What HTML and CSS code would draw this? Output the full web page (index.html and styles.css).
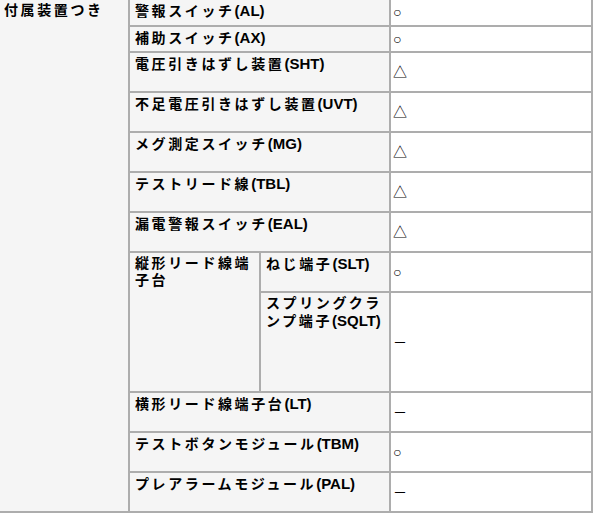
FILE: index.html
```html
<!DOCTYPE html>
<html lang="ja">
<head>
<meta charset="utf-8">
<title>付属装置</title>
<link rel="stylesheet" href="styles.css">
</head>
<body>
<table class="spec">
  <colgroup>
    <col class="c1">
    <col class="c2a">
    <col class="c2b">
    <col class="c3">
  </colgroup>
  <tr class="h27">
    <th class="group" rowspan="12">付属装置つき</th>
    <th colspan="2">警報スイッチ<span class="en">(AL)</span></th>
    <td><span class="mark">○</span></td>
  </tr>
  <tr class="h26">
    <th colspan="2">補助スイッチ<span class="en">(AX)</span></th>
    <td><span class="mark">○</span></td>
  </tr>
  <tr class="h40">
    <th colspan="2">電圧引きはずし装置<span class="en">(SHT)</span></th>
    <td>△</td>
  </tr>
  <tr class="h40">
    <th colspan="2">不足電圧引きはずし装置<span class="en">(UVT)</span></th>
    <td>△</td>
  </tr>
  <tr class="h40">
    <th colspan="2">メグ測定スイッチ<span class="en">(MG)</span></th>
    <td>△</td>
  </tr>
  <tr class="h40">
    <th colspan="2">テストリード線<span class="en">(TBL)</span></th>
    <td>△</td>
  </tr>
  <tr class="h40">
    <th colspan="2">漏電警報スイッチ<span class="en">(EAL)</span></th>
    <td>△</td>
  </tr>
  <tr class="h40">
    <th rowspan="2">縦形リード線端子台</th>
    <th>ねじ端子<span class="en">(SLT)</span></th>
    <td><span class="mark">○</span></td>
  </tr>
  <tr class="h100">
    <th>スプリングクランプ端子<span class="en">(SQLT)</span></th>
    <td>－</td>
  </tr>
  <tr class="h40">
    <th colspan="2">横形リード線端子台<span class="en">(LT)</span></th>
    <td>－</td>
  </tr>
  <tr class="h40">
    <th colspan="2">テストボタンモジュール<span class="en">(TBM)</span></th>
    <td><span class="mark">○</span></td>
  </tr>
  <tr class="h40">
    <th colspan="2">プレアラームモジュール<span class="en">(PAL)</span></th>
    <td>－</td>
  </tr>
</table>
</body>
</html>
```

FILE: styles.css
```css
html, body {
  margin: 0;
  padding: 0;
  background: #ffffff;
}

.spec {
  border-collapse: separate;
  border-spacing: 0;
  table-layout: fixed;
  width: 593px;
  font-family: "Liberation Sans", "Noto Sans CJK JP", sans-serif;
  font-size: 14px;
  line-height: 17px;
  color: #000000;
}

.c1 { width: 130px; }
.c2a { width: 131px; }
.c2b { width: 130px; }
.c3 { width: 202px; }

.spec th,
.spec td {
  box-sizing: border-box;
  border-right: 2px solid #adadad;
  border-bottom: 2px solid #adadad;
  padding: 2px 3px 2px 5px;
  text-align: left;
}

.spec th {
  background: #f5f5f5;
  font-weight: bold;
  vertical-align: top;
  letter-spacing: 2.6px;
}

.spec th.group {
  padding-left: 4px;
}

.spec .en {
  letter-spacing: 0;
  font-size: 15px;
  line-height: 17px;
}

.spec td {
  background: #ffffff;
  font-weight: normal;
  vertical-align: middle;
  padding-left: 2px;
}

.mark {
  font-family: "Liberation Sans", sans-serif;
}

.h27 { height: 27px; }
.h26 { height: 26px; }
.h40 { height: 40px; }
.h100 { height: 100px; }
```
